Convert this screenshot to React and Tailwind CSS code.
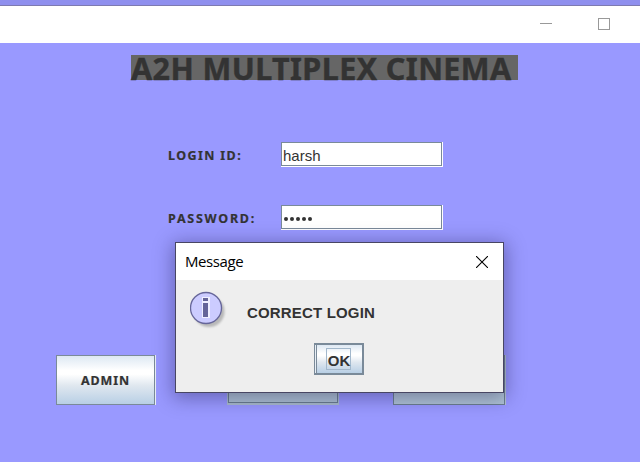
import React from "react";

const label = "font-['Noto_Sans',sans-serif] font-bold whitespace-nowrap text-[#333]";
const metal = "bg-[linear-gradient(to_bottom,#dde8f3_0%,#ffffff_30%,#ffffff_38%,#dfe7ef_62%,#b8cfe5_100%)]";

function WindowBar() {
  return (
    <>
      <div className="h-[6px] shrink-0 border-b border-[#7e7ab0] bg-[#8f8fee]" />
      <header className="flex h-[37px] shrink-0 items-start justify-end bg-white pt-3 pr-[30px]">
        <svg className="h-3 w-[70px]" viewBox="0 0 70 12" fill="none" stroke="#999" shapeRendering="crispEdges">
          <path d="M0 5.5H12" />
          <rect x="58.5" y="0.5" width="11" height="11" />
        </svg>
      </header>
    </>
  );
}

function Field({ children }) {
  return (
    <div className="h-[25px] w-[162px] border-r border-b border-white">
      <div className="h-full border border-[#7a8a99] bg-white">{children}</div>
    </div>
  );
}

function Dialog() {
  return (
    <section className="absolute top-[242px] left-[175px] flex h-[151px] w-[329px] flex-col border border-[#484663] bg-[#eee] shadow-[0_3px_18px_2px_rgba(20,15,60,0.38)]">
      <div className="flex h-[37px] items-center justify-between bg-white pr-[15px] pl-[9px]">
        <span className="font-['Open_Sans','Noto_Sans',sans-serif] text-[15px] tracking-[-0.4px] text-black">Message</span>
        <svg className="h-3 w-3" viewBox="0 0 12 12" stroke="#000" strokeWidth="1.1">
          <path d="M0 0L12 12M12 0L0 12" />
        </svg>
      </div>
      <div className="flex h-[63px] pt-[11px] pl-[14px]">
        <svg className="h-[40px] w-[40px] shrink-0" viewBox="0 0 40 40">
          <defs>
            <filter id="soft" x="-20%" y="-20%" width="150%" height="150%">
              <feGaussianBlur stdDeviation="1.3" />
            </filter>
          </defs>
          <circle cx="19" cy="20.5" r="15.5" fill="#777" opacity="0.45" filter="url(#soft)" />
          <circle cx="16" cy="17" r="15.5" fill="#ccccff" stroke="#666699" strokeWidth="1.3" />
          <path d="M12 6H20V27H12Z" fill="#f0f0ff" />
          <path d="M13 7H18V10H13ZM13 12H18V26H13Z" fill="#666699" />
        </svg>
        <p className="mt-[11px] ml-[17px] font-['Liberation_Sans',Arial,sans-serif] text-[15px] leading-[22px] font-bold tracking-[0.17px] whitespace-nowrap text-[#333]">
          CORRECT LOGIN
        </p>
      </div>
      <button className={"ml-[138px] flex h-8 w-[50px] items-center justify-center border-2 border-l border-[#7a8a99] shadow-[inset_1px_0_0_#e8eef5,inset_2px_0_0_#7a8a99] " + metal}>
        <span className="flex h-[22px] w-[25px] items-center justify-center border border-[#a3b8cc] pt-[4px] pl-px font-['Liberation_Sans',Arial,sans-serif] text-[15px] font-bold text-[#333]">
          OK
        </span>
      </button>
    </section>
  );
}

export default function App() {
  return (
    <main className="relative flex h-[462px] w-[640px] flex-col overflow-hidden bg-[#9999ff]">
      <WindowBar />
      <h1 className={"mt-3 ml-[131px] h-[25px] w-[387px] bg-[#666] text-[30.5px] leading-[27px] tracking-[0.42px] [-webkit-text-stroke:0.4px_#333] " + label}>
        A2H MULTIPLEX CINEMA
      </h1>
      <div className="mt-[62px] ml-[168px] flex h-[25px]">
        <span className={"w-[113px] pt-1 text-[12.5px] leading-[19px] tracking-[1.4px] [-webkit-text-stroke:0.2px_#333] " + label}>LOGIN ID:</span>
        <Field>
          <span className="block pl-px font-['Liberation_Sans',Arial,sans-serif] text-[15px] leading-[26px] text-[#333]">harsh</span>
        </Field>
      </div>
      <div className="mt-[38px] ml-[168px] flex h-[25px]">
        <span className={"w-[113px] pt-1 text-[12.5px] leading-[19px] tracking-[1.75px] [-webkit-text-stroke:0.2px_#333] " + label}>PASSWORD:</span>
        <Field>
          <span className="flex h-full items-center gap-[2px] pt-[4px] pl-[2px]">
            {[0, 1, 2, 3, 4].map((n) => (
              <i key={n} className="size-1 rounded-full bg-[#333]" />
            ))}
          </span>
        </Field>
      </div>
      <div className="mt-[125px] ml-[56px] flex h-[51px]">
        <button className={"flex h-[50px] w-[99px] items-center justify-center border border-[#7a8a99] pt-[2px] text-[12.5px] tracking-[0.9px] shadow-[1px_0_0_#e8eef5] [-webkit-text-stroke:0.2px_#333] " + metal + " " + label}>
          ADMIN
        </button>
        <div className="ml-[72px] h-[50px] w-[112px] bg-[#a9bccd] p-px pb-0.5">
          <div className="h-full border border-[#6c7f90] bg-[#adc1d3]" />
        </div>
        <div className="ml-[54px] h-[50px] w-[112px] border border-[#6c7f90] bg-[#b0c4d6] shadow-[1px_0_0_#b4c3d0]" />
      </div>
      <Dialog />
    </main>
  );
}
